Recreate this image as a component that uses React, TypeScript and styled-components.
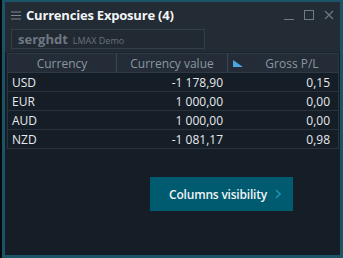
import React from "react";
import styled, { createGlobalStyle } from "styled-components";

const GlobalStyle = createGlobalStyle`
  html, body {
    margin: 0;
    padding: 0;
    background: #06090c;
  }
  body {
    font-family: "Open Sans", "Noto Sans", sans-serif;
  }
`;

const Screen = styled.div`
  width: 343px;
  height: 258px;
  padding-left: 2px;
  box-sizing: border-box;
`;

const Window = styled.div`
  width: 341px;
  height: 258px;
  box-sizing: border-box;
  border: 3px solid #1b5466;
  border-top-width: 2px;
  background: #151d26;
  display: flex;
  flex-direction: column;
`;

const TitleBar = styled.div`
  height: 26px;
  background: #232b35;
  display: flex;
  align-items: center;
  padding: 0 6px;
`;

const Title = styled.div`
  flex: 1;
  color: #f2f4f6;
  font-size: 13px;
  font-weight: 700;
  margin-left: 5px;
  letter-spacing: -0.2px;
`;

const Controls = styled.div`
  display: flex;
  gap: 10px;
  align-items: center;
`;

const AccountBar = styled.div`
  background: #232b35;
  padding: 1px 6px 3px 6px;
  border-bottom: 1px solid #1b232c;
`;

const AccountBox = styled.div`
  width: 194px;
  height: 20px;
  box-sizing: border-box;
  border: 1px solid #343e49;
  background: #212932;
  display: flex;
  align-items: baseline;
  padding: 0 6px;
  gap: 5px;
  line-height: 18px;
`;

const User = styled.span`
  color: #6e7883;
  font-size: 13px;
  font-weight: 700;
`;

const Account = styled.span`
  color: #6a737d;
  font-size: 9px;
`;

const Table = styled.div`
  margin: 0 1px 0 2px;
  border-left: 1px solid #2a3540;
  border-right: 1px solid #2a3540;
`;

const Row = styled.div<{ $head?: boolean }>`
  display: grid;
  grid-template-columns: 109px 111px 1fr;
  height: 18px;
  align-items: center;
  border-bottom: 1px solid ${(p) => (p.$head ? "#2d3945" : "#2a333d")};
  background: ${(p) => (p.$head ? "#232c37" : "transparent")};
  border-top: ${(p) => (p.$head ? "1px solid #2d3945" : "none")};
`;

const HeadCell = styled.div<{ $last?: boolean; $pad?: number }>`
  height: 100%;
  display: flex;
  align-items: center;
  justify-content: center;
  color: #8b96a1;
  font-size: 12px;
  padding-left: ${(p) => p.$pad ?? 0}px;
  border-right: ${(p) => (p.$last ? "none" : "1px solid #3a4652")};
  position: relative;
`;

const SortMark = styled.svg`
  position: absolute;
  left: 5px;
  top: 6px;
`;

const Cell = styled.div<{ $right?: boolean; $end?: number }>`
  color: #e6eaee;
  font-size: 12px;
  padding: 0 ${(p) => p.$end ?? 8}px 0 4px;
  text-align: ${(p) => (p.$right ? "right" : "left")};
`;

const Body = styled.div`
  flex: 1;
  display: flex;
  align-items: flex-start;
  justify-content: flex-end;
  padding: 28px 47px 0 0;
`;

const Button = styled.button`
  width: 143px;
  height: 34px;
  background: #005a70;
  border: none;
  color: #eef4f6;
  font-family: "Open Sans", "Noto Sans", sans-serif;
  font-size: 12px;
  font-weight: 600;
  display: flex;
  align-items: center;
  justify-content: flex-end;
  gap: 8px;
  padding: 0 12px 0 0;
  letter-spacing: -0.2px;
`;

const rows = [
  ["USD", "-1 178,90", "0,15"],
  ["EUR", "1 000,00", "0,00"],
  ["AUD", "1 000,00", "0,00"],
  ["NZD", "-1 081,17", "0,98"],
];

export default function App() {
  return (
    <Screen>
      <GlobalStyle />
      <Window>
        <TitleBar>
          <svg width="10" height="9" viewBox="0 0 10 9">
            <path d="M0 1h10M0 4.5h10M0 8h10" stroke="#7d8893" strokeWidth="1" />
          </svg>
          <Title>Currencies Exposure (4)</Title>
          <Controls>
            <svg width="10" height="10" viewBox="0 0 10 10">
              <path d="M0 9.5h10" stroke="#6f7a85" strokeWidth="1" />
            </svg>
            <svg width="10" height="10" viewBox="0 0 10 10">
              <rect x="0.5" y="0.5" width="9" height="9" fill="none" stroke="#6f7a85" strokeWidth="1" />
            </svg>
            <svg width="10" height="10" viewBox="0 0 10 10">
              <path d="M1 1l8 8M9 1l-8 8" stroke="#6f7a85" strokeWidth="1.1" />
            </svg>
          </Controls>
        </TitleBar>
        <AccountBar>
          <AccountBox>
            <User>serghdt</User>
            <Account>LMAX Demo</Account>
          </AccountBox>
        </AccountBar>
        <Table>
          <Row $head>
            <HeadCell>Currency</HeadCell>
            <HeadCell>Currency value</HeadCell>
            <HeadCell $last $pad={18}>
              <SortMark width="10" height="7" viewBox="0 0 10 7">
                <path d="M0 0L10 7H0z" fill="#4aa8e0" />
              </SortMark>
              Gross P/L
            </HeadCell>
          </Row>
          {rows.map(([c, v, g]) => (
            <Row key={c}>
              <Cell>{c}</Cell>
              <Cell $right $end={5}>{v}</Cell>
              <Cell $right>{g}</Cell>
            </Row>
          ))}
        </Table>
        <Body>
          <Button>
            Columns visibility
            <svg width="6" height="10" viewBox="0 0 6 10">
              <path d="M1 1l4 4-4 4" fill="none" stroke="#1d8fb4" strokeWidth="1.6" />
            </svg>
          </Button>
        </Body>
      </Window>
    </Screen>
  );
}
